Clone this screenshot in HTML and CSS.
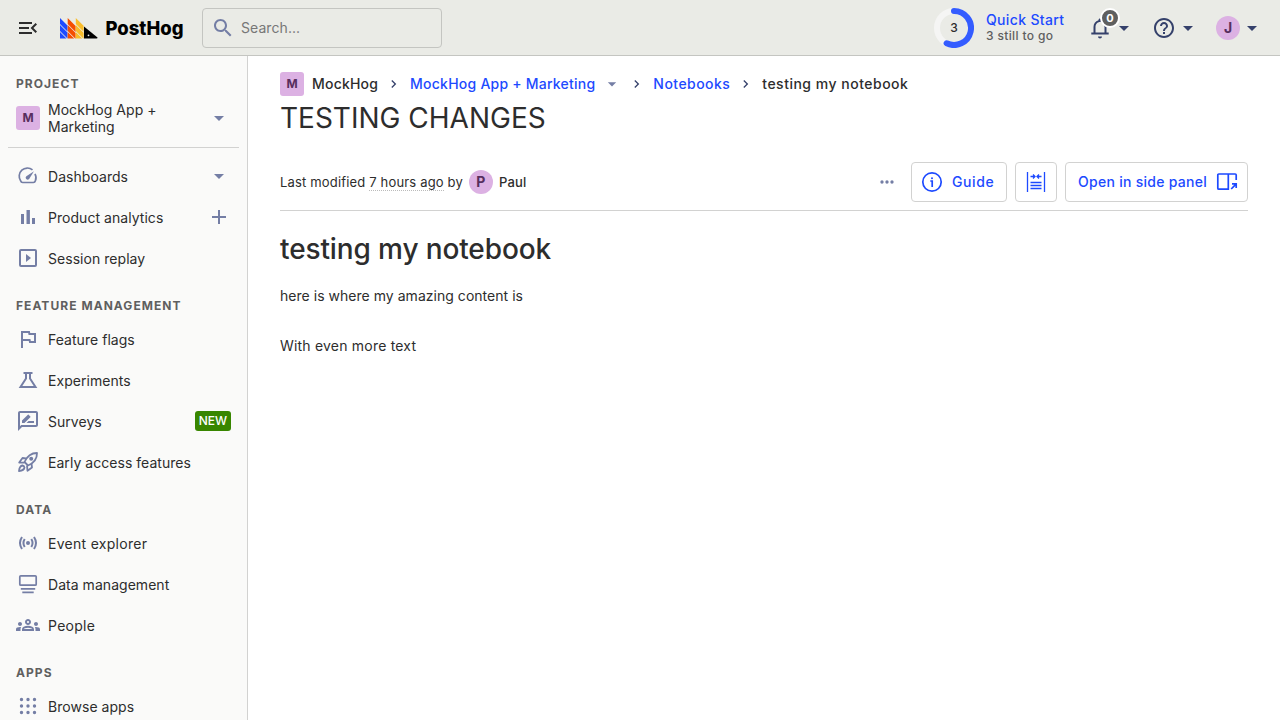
FILE: index.html
```html
<!DOCTYPE html>
<html lang="en">
<head>
<meta charset="utf-8">
<title>testing my notebook • PostHog</title>
<link rel="stylesheet" href="styles.css">
</head>
<body>
<svg class="defs" width="0" height="0">
  <symbol id="caret" viewBox="0 0 24 24"><path d="M7 10l5 5 5-5z"/></symbol>
  <symbol id="chevron" viewBox="0 0 24 24"><path d="M9.400 18 8 16.600l4.600-4.600L8 7.400 9.400 6l6 6z"/></symbol>
</svg>
<header class="topbar">
  <button class="icon-btn menu"><svg class="icon" viewBox="0 0 24 24"><path d="M3 18h13v-2H3v2zM3 13h10v-2H3v2zm0-7v2h13V6H3zm18 9.590L17.420 12 21 8.410 19.590 7l-5 5 5 5L21 15.590z"/></svg></button>
  <a class="logo">
    <svg width="128" height="28" viewBox="0 0 128 28">
      <path fill="#1d4aff" d="M0 4 7.500 11.500V17.500L0 10zM0 11 7.500 18.500V24.500L0 17zM0 18 6.500 24.500H0z"/>
      <path fill="#f54e00" d="M7.700 4 15.600 11.900V17.900L7.700 10zM7.700 11 15.600 18.900V24.500H15.200L7.700 17zM7.700 18 14.200 24.500H7.700z"/>
      <path fill="#f9bd2b" d="M15.800 4 23.600 11.800V17.800L15.800 10zM15.800 11 23.600 18.800V24.500H23.300L15.800 17zM15.800 18 22.300 24.500H15.800z"/>
      <path d="M24 12.500 37.500 23.500q.3 1-1 1H24z"/><circle cx="28.500" cy="21.300" r=".9" fill="#eeefe9"/>
      <text class="wordmark" x="45.500" y="21" textLength="78" lengthAdjust="spacingAndGlyphs">PostHog</text>
    </svg>
  </a>
  <div class="search"><svg class="icon" viewBox="0 0 24 24"><path d="M15.500 14h-.79l-.28-.27C15.410 12.590 16 11.110 16 9.500 16 5.910 13.090 3 9.500 3S3 5.910 3 9.500 5.910 16 9.500 16c1.610 0 3.090-.59 4.230-1.570l.27.28v.79l5 4.990L20.490 19l-4.990-5zm-6 0C7.010 14 5 11.990 5 9.500S7.010 5 9.500 5 14 7.010 14 9.500 11.990 14 9.500 14z"/></svg><span>Search...</span></div>
  <div class="topright">
    <div class="quick">
      <svg width="40" height="40" viewBox="0 0 40 40"><circle class="ring-bg" cx="20" cy="20" r="17"/><path class="ring" d="M20 3a17 17 0 1 1-7.400 32.300"/><text class="ring-num" x="20" y="24" text-anchor="middle">3</text></svg>
      <div class="quick-text"><div class="quick-title">Quick Start</div><div class="quick-sub">3 still to go</div></div>
    </div>
    <div class="bell"><svg class="icon" viewBox="0 0 24 24"><path d="M12 22.500c1.100 0 2-.9 2-2h-4c0 1.100.9 2 2 2zm6.500-6.500v-5c0-3.370-1.830-6.140-5-6.820V4c0-.83-.67-1.500-1.500-1.500s-1.500.67-1.500 1.500v.18C7.340 4.860 5.500 7.620 5.500 11v5.500H3.300v2h17.400v-2h-2.200zm-2 .5h-9V11c0-2.680 1.810-5 4.500-5s4.500 2.320 4.500 5v5.500z"/></svg><span class="count">0</span><svg class="icon"><use href="#caret"/></svg></div>
    <div class="help"><svg class="icon" viewBox="0 0 24 24"><path d="M11 18h2v-2h-2v2zm1-16C6.480 2 2 6.480 2 12s4.480 10 10 10 10-4.480 10-10S17.520 2 12 2zm0 18c-4.410 0-8-3.590-8-8s3.590-8 8-8 8 3.590 8 8-3.590 8-8 8zm0-14c-2.210 0-4 1.790-4 4h2c0-1.100.9-2 2-2s2 .9 2 2c0 2-3 1.750-3 5h2c0-2.250 3-2.500 3-5 0-2.210-1.790-4-4-4z"/></svg><svg class="icon"><use href="#caret"/></svg></div>
    <div class="me"><span class="avatar">J</span><svg class="icon"><use href="#caret"/></svg></div>
  </div>
</header>
<div class="shell">
  <nav class="sidebar">
    <h5 class="first">Project</h5>
    <div class="project"><span class="lettermark">M</span><span class="project-name">MockHog App + Marketing</span><svg class="icon side"><use href="#caret"/></svg></div>
    <hr>
    <a class="item"><svg class="icon" viewBox="0 0 24 24"><path class="line thin" d="M16.500 5.800A8.200 8.200 0 0 0 4.600 16.800q.5 1.700 2 1.700h10.800q1.500 0 2-1.700a8.200 8.200 0 0 0-.4-7"/><path d="M18 7.200l-7.700 5a2 2 0 1 0 2.800 2.900z"/></svg><span>Dashboards</span><svg class="icon side"><use href="#caret"/></svg></a>
    <a class="item"><svg class="icon" viewBox="0 0 24 24"><path d="M5 9h3v10H5zM10.500 5h3.400v14h-3.400zM16 13h3v6h-3z"/></svg><span>Product analytics</span><svg class="icon side" viewBox="0 0 24 24"><path d="M19 13h-6v6h-2v-6H5v-2h6V5h2v6h6v2z"/></svg></a>
    <a class="item"><svg class="icon" viewBox="0 0 24 24"><rect class="line" x="4" y="4" width="16" height="16" rx="1"/><path d="M10 8l5 4-5 4z"/></svg><span>Session replay</span></a>
    <h5>Feature management</h5>
    <a class="item"><svg class="icon" viewBox="0 0 24 24"><path class="line" d="M6 21V5h7l.4 2H19v8h-5l-.4-2H6"/></svg><span>Feature flags</span></a>
    <a class="item"><svg class="icon" viewBox="0 0 24 24"><path class="line" d="M7.500 5h9M10 5v5.500L4.500 19h15L14 10.500V5"/></svg><span>Experiments</span></a>
    <a class="item"><svg class="icon" viewBox="0 0 24 24"><path d="M20 2H4c-1.100 0-2 .9-2 2v18l4-4h14c1.100 0 2-.9 2-2V4c0-1.100-.9-2-2-2zm0 14H5.170L4 17.170V4h16v12zm-9.500-2H18v-2h-5.500zm3.860-5.870c.2-.2.200-.51 0-.71l-1.770-1.770c-.2-.2-.51-.2-.71 0L6 11.530V14h2.470l5.890-5.870z"/></svg><span>Surveys</span><b class="new">NEW</b></a>
    <a class="item"><svg class="icon" viewBox="0 0 24 24"><g class="line rocket"><path d="M8.500 12Q12.500 3 21 3q.2 8.500-9 12.500z"/><path d="M10 8.500 6.500 8l-3.300 4.500 5.300.2M15.500 14l.5 3.500-4.500 3.300L11 15.500M6.500 15.500q-3 .5-3.500 5.500 5-.5 5.500-3.500-.2-1.700-2-2z"/></g><circle cx="15.200" cy="8.800" r="2"/></svg><span>Early access features</span></a>
    <h5>Data</h5>
    <a class="item"><svg class="icon" viewBox="0 0 24 24"><path class="line" d="M6 6Q2 12 6 18M18 6q4 6 0 12M8.700 8q-2.500 4 0 8M15.300 8q2.500 4 0 8"/><circle cx="12" cy="12" r="2"/></svg><span class="wide">Event explorer</span></a>
    <a class="item"><svg class="icon" viewBox="0 0 24 24"><rect class="line thin" x="3.800" y="3.800" width="16.400" height="9.400" rx="1"/><path class="line thin" d="M4.800 16.800h14.400M6.300 20.400h11.400"/></svg><span>Data management</span></a>
    <a class="item"><svg class="icon" viewBox="0 0 24 24"><path d="M4 13c1.100 0 2-.9 2-2s-.9-2-2-2-2 .9-2 2 .9 2 2 2zm1.130 1.100c-.37-.06-.74-.1-1.130-.1-.99 0-1.930.21-2.780.58C.48 14.900 0 15.620 0 16.430V18h4.500v-1.610c0-.83.23-1.610.63-2.290zM20 13c1.100 0 2-.9 2-2s-.9-2-2-2-2 .9-2 2 .9 2 2 2zm4 3.430c0-.81-.48-1.530-1.220-1.850-.85-.37-1.790-.58-2.780-.58-.39 0-.76.04-1.130.1.4.68.630 1.460.630 2.290V18H24v-1.570zm-7.760-2.780c-1.170-.52-2.610-.9-4.240-.9-1.630 0-3.070.39-4.240.9C6.680 14.130 6 15.210 6 16.390V18h12v-1.610c0-1.180-.68-2.260-1.760-2.740zM8.070 16c.09-.23.13-.39.91-.69.97-.38 1.990-.56 3.020-.56s2.050.18 3.020.56c.77.3.81.46.91.69H8.070zM12 8c.55 0 1 .45 1 1s-.45 1-1 1-1-.45-1-1 .45-1 1-1m0-2c-1.660 0-3 1.340-3 3s1.340 3 3 3 3-1.340 3-3-1.340-3-3-3z"/></svg><span class="wide">People</span></a>
    <h5>Apps</h5>
    <a class="item"><svg class="icon" viewBox="0 0 24 24"><path class="dots" d="M5.500 5.500h0M12 5.500h0M18.500 5.500h0M5.500 12h0M12 12h0M18.500 12h0M5.500 18.500h0M12 18.500h0M18.500 18.500h0"/></svg><span>Browse apps</span></a>
  </nav>
  <main>
    <div class="crumbs"><span class="lettermark">M</span><span class="org">MockHog</span><svg class="sep"><use href="#chevron"/></svg><a class="app">MockHog App + Marketing</a><svg class="drop"><use href="#caret"/></svg><svg class="sep after"><use href="#chevron"/></svg><a class="section">Notebooks</a><svg class="sep"><use href="#chevron"/></svg><span class="here">testing my notebook</span></div>
    <h1>TESTING CHANGES</h1>
    <div class="bar">
      <div class="modified"><span>Last modified <u>7 hours ago</u> by</span><span class="avatar">P</span><b>Paul</b></div>
      <div class="actions">
        <svg class="more" viewBox="0 0 24 24"><path d="M4.500 9.500a2.500 2.500 0 1 0 0 5 2.500 2.500 0 0 0 0-5zM12 9.500a2.500 2.500 0 1 0 0 5 2.500 2.500 0 0 0 0-5zM19.500 9.500a2.500 2.500 0 1 0 0 5 2.500 2.500 0 0 0 0-5z"/></svg>
        <button class="btn guide"><svg class="icon" viewBox="0 0 24 24"><circle class="line thin" cx="12" cy="12" r="9.200"/><path class="line thin" d="M10.300 11h1.900v6"/><circle cx="12" cy="8.200" r="1"/></svg>Guide</button>
        <button class="btn"><svg class="icon" viewBox="0 0 24 24"><path class="line hair" d="M3.500 2v20M20.500 2v20M6.500 12.500h11M6.500 15.500h11M6.500 18.500h11M6.500 6.500h4.500M9 4.500l2 2-2 2M17.500 6.500H13M15 4.500l-2 2 2 2"/></svg></button>
        <button class="btn panel"><span>Open in side panel</span><svg class="icon" viewBox="0 0 24 24"><path class="line thin" d="M21.200 10V5q0-1-1-1H3.800Q2.800 4 2.800 5v13.200q0 1 1 1h9.500V4M16.200 19l4.800-4.800M17 13.800h4.200v4.200"/></svg></button>
      </div>
    </div>
    <h2>testing my notebook</h2>
    <p>here is where my amazing content is</p>
    <p class="second">With even more text</p>
  </main>
</div>
</body>
</html>
```

FILE: styles.css
```css
* { box-sizing: border-box; }
body { margin: 0; height: 720px; overflow: hidden; display: flex; flex-direction: column; font: 14px/20px Inter, sans-serif; color: #2d2d2d; background: #fff; }
.defs { position: absolute; }
svg { flex: none; display: block; }
.icon { width: 24px; height: 24px; fill: currentColor; }
.line { fill: none; stroke: currentColor; stroke-width: 2; }
.thin { stroke-width: 1.7; }
.hair { stroke-width: 1.3; }
.rocket { stroke-width: 1.8; stroke-linejoin: round; }
.dots { stroke: currentColor; stroke-width: 3.4; stroke-linecap: round; }
.topbar { height: 56px; flex: none; display: flex; align-items: center; padding: 0 16px; background: #eaebe6; border-bottom: 1px solid #c4c5c1; color: #35416b; }
.icon-btn { border: 0; padding: 0; background: none; color: #2d2d2d; }
.logo { margin-left: 20px; width: 142px; fill: #000; }
.wordmark { font: 800 19px Inter, sans-serif; }
.search { width: 240px; height: 40px; display: flex; align-items: center; gap: 6px; padding: 0 8px; border: 1px solid #c4c5c1; border-radius: 4px; color: #747ea5; }
.search span { color: #777; letter-spacing: .07px; }
.topright { margin-left: auto; display: flex; align-items: center; }
.quick { display: flex; align-items: center; gap: 12px; margin-right: 24px; }
.quick-text { width: 78px; padding-bottom: 1px; white-space: nowrap; }
.ring-bg { fill: none; stroke: #f5f5f4; stroke-width: 6; }
.ring { fill: none; stroke: #345cff; stroke-width: 6; stroke-linecap: round; }
.ring-num { font: 500 12px Inter, sans-serif; fill: #2d2d2d; }
.quick-title { color: #1d4aff; font-weight: 500; line-height: 17px; letter-spacing: .34px; }
.quick-sub { color: #5f5f5f; font-size: 12px; font-weight: 500; line-height: 15px; letter-spacing: .36px; }
.bell, .help, .me { display: flex; position: relative; align-items: center; margin-right: 16px; }
.me { margin-right: 0; }
.count { position: absolute; left: 12px; top: -8px; width: 20px; height: 20px; border: 2px solid #fff; border-radius: 50%; background: #5f5f5f; color: #fff; font: 700 11px/16px Inter, sans-serif; text-align: center; }
.avatar { width: 24px; height: 24px; border-radius: 50%; background: #dcb1e3; color: #572e5e; font-weight: 700; line-height: 24px; text-align: center; }
.shell { flex: 1; display: flex; min-height: 0; }
.sidebar { width: 248px; flex: none; overflow: hidden; background: #fafaf9; border-right: 1px solid #d2d2d1; padding: 16px 8px 0; letter-spacing: .04px; }
.sidebar h5 { margin: 15px 0 1px; padding: 0 8px; height: 24px; font: 700 12px/24px Inter, sans-serif; letter-spacing: 1.05px; color: #5f5f5f; text-transform: uppercase; }
.sidebar h5.first { margin: 0; }
.lettermark { width: 24px; height: 24px; flex: none; border-radius: 3px; background: #dcb1e3; color: #572e5e; font: 700 12px/24px Inter, sans-serif; text-align: center; }
.project { display: flex; align-items: center; gap: 8px; height: 44px; padding: 0 8px; line-height: 17px; }
.project-name { width: 130px; }
.side { margin-left: auto; color: #747ea5; }
.sidebar hr { border: 0; border-top: 1px solid #d2d2d1; margin: 7px 0 8px; }
.item { display: flex; align-items: center; gap: 8px; height: 41px; padding: 0 8px; }
.item .icon { color: #747ea5; margin-bottom: 1px; }
.item .side { margin-right: 0; }
.wide { letter-spacing: .28px; }
.new { margin-left: auto; margin-bottom: 1px; height: 20px; padding: 0 4px; border-radius: 3px; background: #388600; color: #fff; font: 500 12px/20px Inter, sans-serif; letter-spacing: 0; }
main { flex: 1; padding: 16px 32px 0; min-width: 0; }
.crumbs { display: flex; align-items: center; height: 24px; font-weight: 500; }
.org { margin-left: 8px; letter-spacing: .2px; }
.app { letter-spacing: .23px; }
.section { letter-spacing: .45px; }
.here { letter-spacing: .5px; }
.crumbs a, .btn { color: #1d4aff; }
.sep { width: 16px; height: 16px; margin: 0 8px; fill: #35416b; }
.drop { width: 20px; height: 20px; margin-left: 7px; fill: #747ea5; }
.sep.after { margin-left: 7px; }
h1, h2 { margin: 0; font-weight: 400; font-size: 28px; line-height: 40px; }
h1 { margin-top: 2px; }
h2 { font-weight: 500; margin-top: 18px; letter-spacing: -.12px; }
.bar { display: flex; align-items: center; justify-content: space-between; margin-top: 24px; padding-bottom: 8px; border-bottom: 1px solid #d2d2d1; }
.modified { display: flex; align-items: center; gap: 6px; font-size: 13px; letter-spacing: .17px; }
.modified u { text-decoration: none; border-bottom: 1px dotted #bbb; }
.modified b { font-weight: 500; }
.modified .avatar { font-size: 14px; }
.actions { display: flex; align-items: center; gap: 8px; }
.more { width: 16px; height: 16px; margin-right: 8px; fill: #747ea5; }
.btn { height: 40px; display: flex; align-items: center; gap: 8px; padding: 0 8px; border: 1px solid #d2d2d1; border-radius: 4px; background: #fff; font: 500 14px/20px Inter, sans-serif; }
.guide { width: 96px; letter-spacing: .6px; }
.panel { width: 183px; padding-left: 12px; letter-spacing: .28px; white-space: nowrap; justify-content: space-between; }
p { margin: 17px 0 0; letter-spacing: .03px; }
.second { margin-top: 30px; letter-spacing: .2px; }
```
